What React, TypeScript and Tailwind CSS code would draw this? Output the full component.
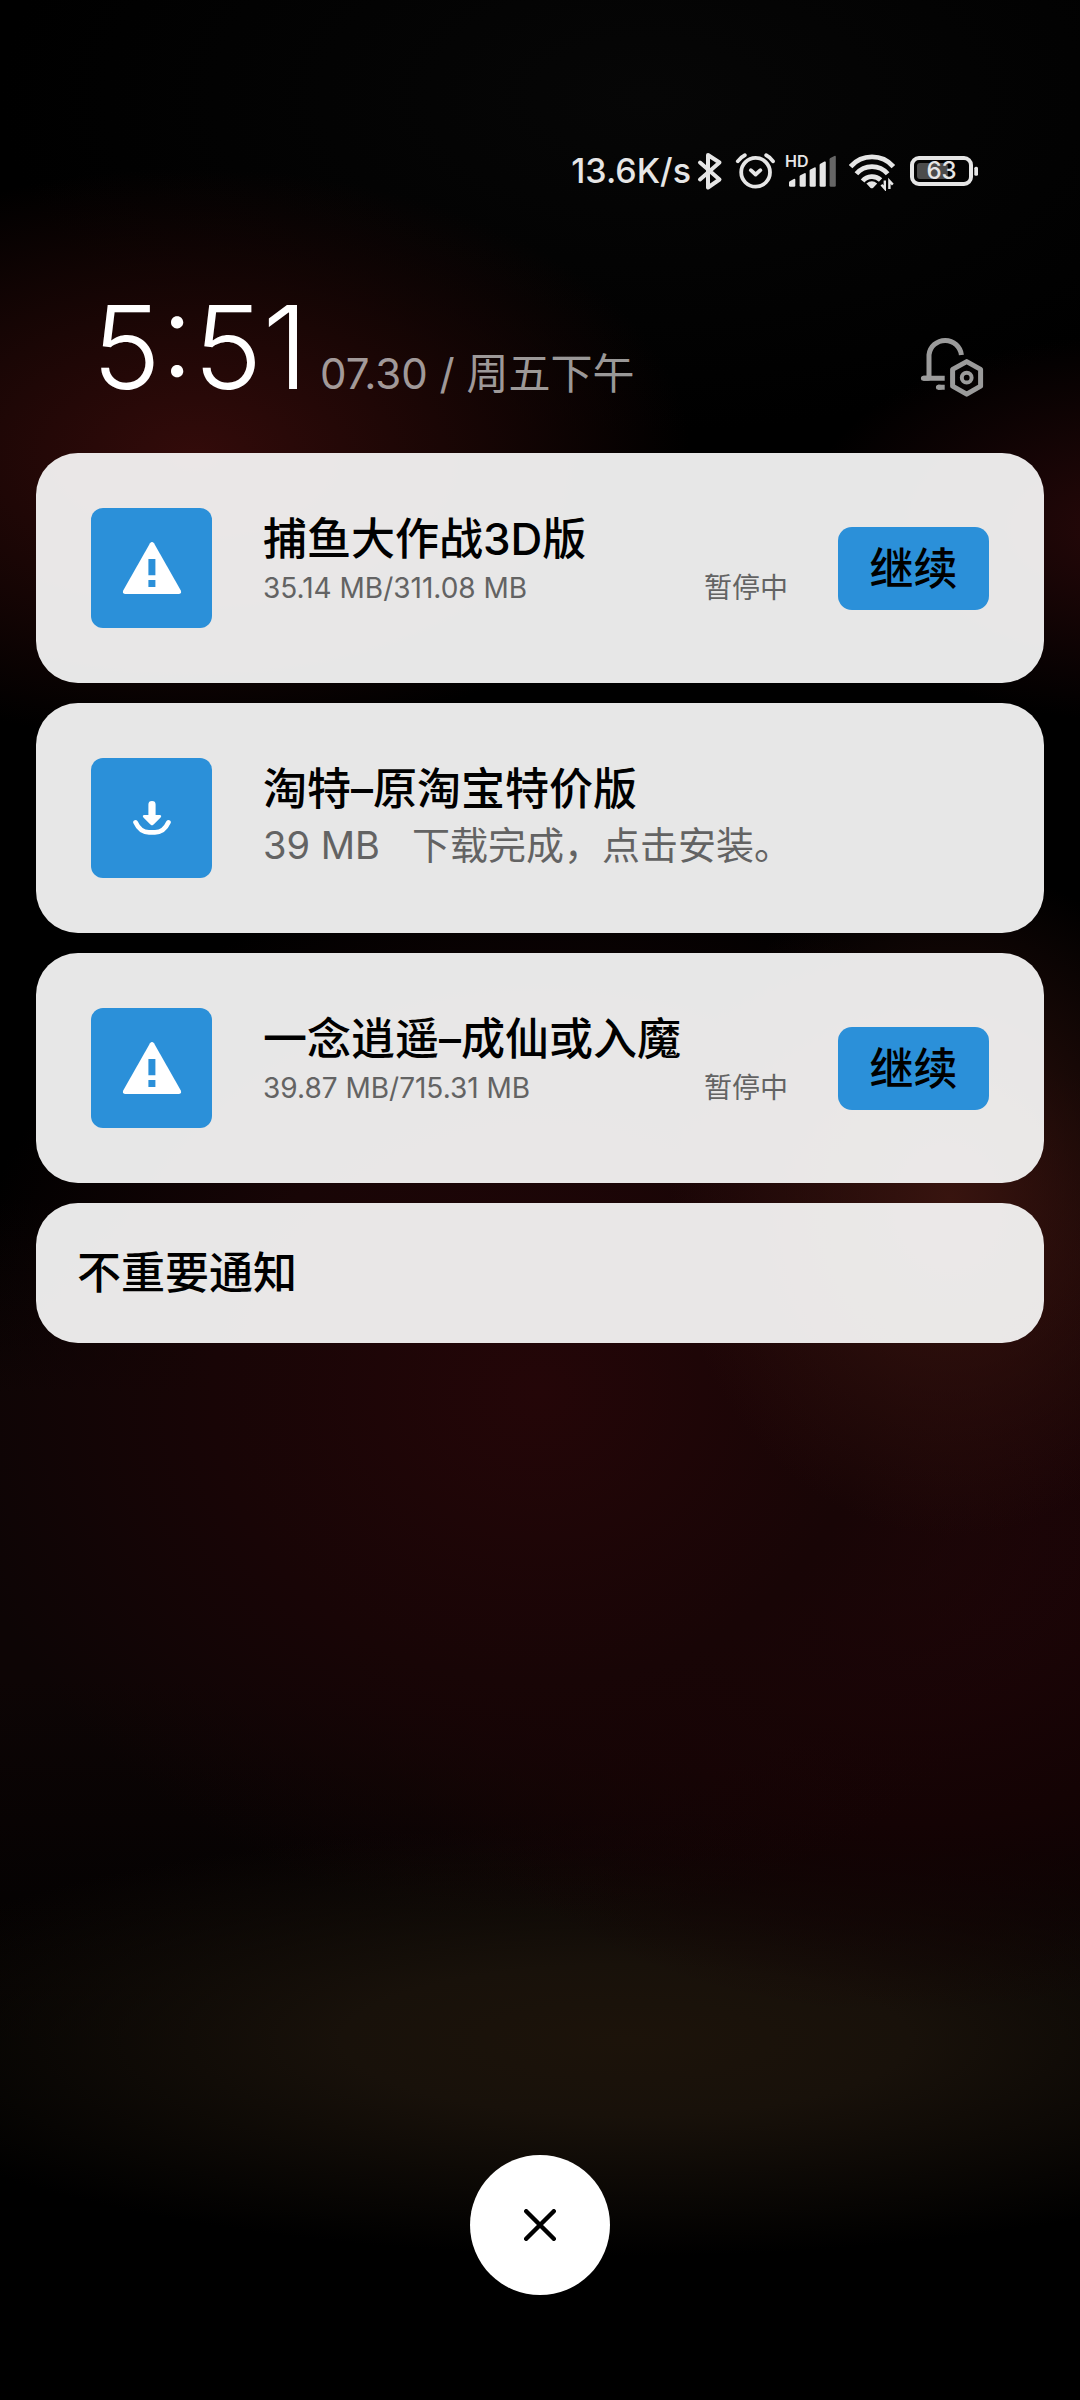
import React from 'react';
import { clsx } from 'clsx';

interface INotification {
 id: number;
 icon: 'warning' | 'download';
 title: string;
 desc: string;
 status?: string;
 action?: string;
}

const notifications: INotification[] = [
 { id: 1, icon: 'warning', title: '捕鱼大作战3D版', desc: '35.14 MB/311.08 MB', status: '暂停中', action: '继续' },
 { id: 2, icon: 'download', title: '淘特–原淘宝特价版', desc: '39 MB   下载完成，点击安装。' },
 { id: 3, icon: 'warning', title: '一念逍遥–成仙或入魔', desc: '39.87 MB/715.31 MB', status: '暂停中', action: '继续' },
];

function BluetoothIcon() {
 return (
  <svg width="26" height="40" viewBox="0 0 26 40" fill="none" stroke="currentColor" strokeWidth="4" strokeLinejoin="round" strokeLinecap="round">
   <path d="M3 11.5 22.5 28.5 11 36.5V4L22.5 11.5 3 28.5" />
  </svg>
 );
}

function AlarmIcon() {
 return (
  <svg width="40" height="40" viewBox="0 0 40 40" fill="none" stroke="currentColor" strokeWidth="3.8" strokeLinecap="round">
   <circle cx="20.6" cy="21.3" r="14.4" />
   <path d="m15.8 19.2 4.8 4.3 4.8-4.3" strokeLinejoin="round" />
   <path d="M2.8 10.3Q5.5 6.3 9.8 4.2M38 10.3Q35.5 6.3 31.2 4.2" />
  </svg>
 );
}

function SignalIcon() {
 return (
  <div className="relative">
   <svg width="50" height="40" viewBox="0 0 50 40" fill="currentColor">
    <path d="M2 34.5V31.5Q2 30.7 2.8 30.2L6.8 28Q8.3 27.4 8.3 29V34.5Q8.3 35.8 7 35.8H3.3Q2 35.8 2 34.5Z" />
    <path d="M12.6 34.5V25.5Q12.6 24.7 13.4 24.2L17.4 22.2Q18.8 21.6 18.8 23.2V34.5Q18.8 35.8 17.5 35.8H13.9Q12.6 35.8 12.6 34.5Z" />
    <path d="M22.6 34.5V19.8Q22.6 19 23.4 18.5L27.4 16.4Q28.8 15.8 28.8 17.4V34.5Q28.8 35.8 27.5 35.8H23.9Q22.6 35.8 22.6 34.5Z" />
    <path d="M32.6 34.5V14Q32.6 13.2 33.4 12.7L37.4 10.6Q38.8 10 38.8 11.6V34.5Q38.8 35.8 37.5 35.8H33.9Q32.6 35.8 32.6 34.5Z" />
    <path d="M42.6 34.5V8.3Q42.6 7.5 43.4 7L47.4 4.9Q48.8 4.3 48.8 5.9V34.5Q48.8 35.8 47.5 35.8H43.9Q42.6 35.8 42.6 34.5Z" fill="#666" />
   </svg>
   <span className="absolute -left-0.5 top-0.5 text-base font-semibold leading-4">HD</span>
  </div>
 );
}

function WifiIcon() {
 return (
  <svg width="48" height="40" viewBox="0 0 48 40" fill="none" stroke="currentColor" strokeWidth="4.8">
   <path d="M1.6 15.6A28.5 28.5 0 0 1 44.4 15.6" />
   <path d="M7.4 22.8A20.5 20.5 0 0 1 38.6 22.8" />
   <path d="M13.6 30A12.4 12.4 0 0 1 31.6 29" />
   <path d="M17.4 32.6Q23 28 28.2 32.6L24 36.9Q22.8 37.8 21.6 36.9Z" fill="currentColor" stroke="none" />
   <path d="M35.8 29.4V37.6L32.4 33.8M40.4 38V29.8L43.8 33.6" strokeWidth="2.4" />
  </svg>
 );
}

function BatteryIcon({ level }: { level: number }) {
 return (
  <div className="relative">
   <svg width="69" height="40" viewBox="0 0 69 40" fill="none">
    <rect x="8" y="12" width={(level / 100) * 49} height="16" rx="3" fill="#4c4c4c" />
    <rect x="3" y="7" width="59" height="26" rx="7" stroke="currentColor" strokeWidth="4" />
    <rect x="65.3" y="15.8" width="3.7" height="9" rx="1.5" fill="currentColor" />
   </svg>
   <span className="absolute inset-y-0 left-0 right-1 flex items-center justify-center text-2xl font-medium leading-none">{level}</span>
  </div>
 );
}

function BellSettingsIcon() {
 return (
  <svg width="64" height="62" viewBox="0 0 64 62" fill="none" stroke="currentColor" strokeWidth="5">
   <path d="M9 43V19.8A16.3 16.3 0 0 1 41.4 20" />
   <path d="M3.3 43.3H24.7M18 52.3H24.7" />
   <path d="M3.4 43.3H8M18.4 52.3H20" strokeLinecap="round" />
   <path d="M46.7 26.6 60.6 34.4V51.2L46.7 59.2 32.6 51.2V34.4Z" strokeLinejoin="round" />
   <circle cx="46.7" cy="42.7" r="4.9" strokeWidth="4" />
  </svg>
 );
}

function AppIcon({ type }: { type: INotification['icon'] }) {
 return (
  <div className="flex h-[120px] w-[121px] shrink-0 items-center justify-center rounded-xl bg-[#2b90d9]">
   {type === 'warning' ? (
    <svg width="60" height="60" viewBox="0 0 60 60">
     <path d="M28 5.2Q30 2.6 32 5.2L58.8 52.6Q60 55.8 57 56H3Q0 55.8 1.2 52.6Z" fill="#fff" />
     <path d="M26.4 21H33.4V37.2H26.4ZM26.4 42H33.4V49H26.4Z" fill="#2b90d9" />
    </svg>
   ) : (
    <svg width="40" height="36" viewBox="0 0 40 36">
     <path d="M16.4 4.4Q16.4 1 20 1T23.6 4.4V15H27.6Q30.2 15.2 28.6 17.4L21.6 24.6Q20 26.2 18.4 24.6L11.4 17.4Q9.8 15.2 12.4 15H16.4Z" fill="#fff" />
     <path d="M3.6 22.4Q8 32.3 17 32.3H23Q32 32.3 36.4 22.4" fill="none" stroke="#fff" strokeWidth="4.8" strokeLinecap="round" />
    </svg>
   )}
  </div>
 );
}

function NotificationItem({ item }: { item: INotification }) {
 return (
  <li className="flex min-h-[230px] items-center rounded-[42px] bg-[#fbfbfb]/92 px-[55px]">
   <AppIcon type={item.icon} />
   <div className="ml-[51px] min-w-0 flex-1 self-stretch pt-14">
    <h2 className="text-[44px] font-medium leading-[60px] text-black">{item.title}</h2>
    <div className={clsx('flex justify-between text-[#636363]', item.action ? 'text-[28px] leading-[38px]' : 'text-[38px] leading-[52px]')}>
     <p className="whitespace-pre">{item.desc}</p>
     {item.status && <span>{item.status}</span>}
    </div>
   </div>
   {item.action && (
    <button type="button" className="ml-[50px] h-[83px] w-[151px] shrink-0 rounded-[14px] bg-[#2b90d9] pt-0.5 text-[44px] font-medium leading-none text-black">
     {item.action}
    </button>
   )}
  </li>
 );
}

function StatusBar() {
 return (
  <div className="flex h-10 items-center justify-end gap-3 pr-[66px] text-[#e6e6e6]">
   <div className="flex items-center gap-1.5">
    <span className="text-[34px] font-medium leading-10">13.6K/s</span>
    <BluetoothIcon />
   </div>
   <AlarmIcon />
   <SignalIcon />
   <WifiIcon />
   <BatteryIcon level={63} />
  </div>
 );
}

function App() {
 return (
  <div
   className={clsx(
    'flex min-h-screen flex-col bg-black px-9 pb-[105px] pt-[151px] font-["Inter","Noto_Sans_CJK_SC",sans-serif]',
    'bg-[radial-gradient(46%_12%_at_18%_19%,#330b0a,#1a0605_50%,transparent),radial-gradient(30%_8%_at_104%_22%,#260809,transparent),radial-gradient(26%_14%_at_88%_50%,#38140f,transparent),radial-gradient(55%_22%_at_50%_58%,#240608,#180506_55%,transparent),radial-gradient(55%_20%_at_84%_64%,#210609,#140304_60%,transparent),radial-gradient(75%_9%_at_58%_85%,#1c130a,#18110a_35%,transparent),radial-gradient(60%_14%_at_60%_4%,#060606,transparent),linear-gradient(transparent_50%,#0d0505_58%,#0d0505_70%,transparent_85%)]',
   )}
  >
   <StatusBar />
   <header className="mt-24 flex items-baseline pl-14 pr-[60px]">
    <time className="text-[116px] font-light leading-[120px] text-white">5:51</time>
    <span className="ml-3 text-[42px] leading-none text-white/60">07.30 / 周五下午</span>
    <button type="button" aria-label="通知设置" className="mb-2.5 ml-auto self-end text-[#9b9b9b]">
     <BellSettingsIcon />
    </button>
   </header>
   <main className="mt-[46px]">
    <ul className="flex flex-col gap-5">
     {notifications.map((item) => (
      <NotificationItem key={item.id} item={item} />
     ))}
     <li className="flex h-[140px] items-center rounded-[42px] bg-[#fbfbfb]/92 px-[41px]">
      <h2 className="text-[44px] font-medium leading-[60px] text-black">不重要通知</h2>
     </li>
    </ul>
   </main>
   <button type="button" aria-label="清除全部" className="mx-auto mt-auto flex size-[140px] items-center justify-center rounded-full bg-white text-black">
    <svg width="32" height="32" viewBox="0 0 32 32" fill="none" stroke="currentColor" strokeWidth="4.4" strokeLinecap="round">
     <path d="M2.2 2.2 29.8 29.8M29.8 2.2 2.2 29.8" />
    </svg>
   </button>
  </div>
 );
}

export default App;
